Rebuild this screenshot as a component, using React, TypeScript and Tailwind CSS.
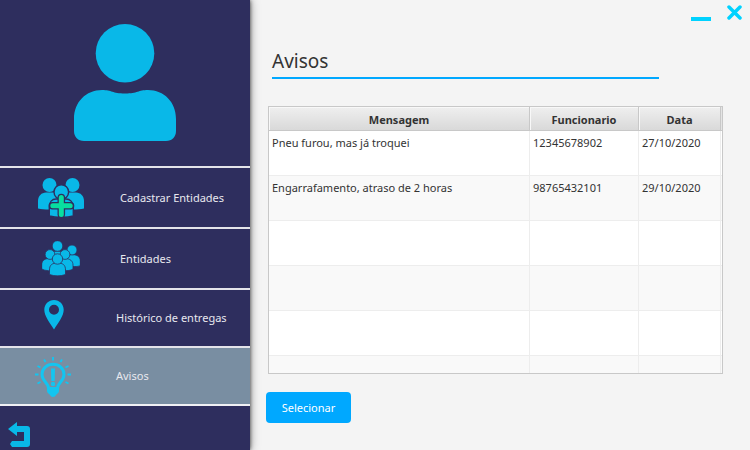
import type { ReactNode } from "react";

function UserIcon() {
  return (
    <svg width="102" height="118" viewBox="0 0 102 118" fill="#09b8e8" aria-hidden="true">
      <circle cx="51" cy="29.3" r="29.3" />
      <path d="M0 95C0 78 12 66 28 66C38 66 38 69.500 51 69.500C64 69.500 64 66 74 66C90 66 102 78 102 95V107C102 113 98 117 92 117H10C4 117 0 113 0 107Z" />
    </svg>
  );
}

function AddPeopleIcon() {
  return (
    <svg width="48" height="40" viewBox="0 0 48 40" aria-hidden="true">
      <g fill="#09b8e8">
        <circle cx="12.500" cy="7" r="7" />
        <circle cx="35.500" cy="7" r="7" />
        <path d="M1 30.500V23C1 18 4.500 14.500 9 14.500H20V31C13 32 6 31.500 1 30.500Z" />
        <path d="M47 30.500V23C47 18 43.500 14.500 39 14.500H28V31C35 32 42 31.500 47 30.500Z" />
      </g>
      <g fill="#09b8e8" stroke="#2e2e5e" strokeWidth="1.400">
        <path d="M12.300 38V29C12.300 24 15 21 19 21H29C33 21 36.300 24 36.300 29V38C30 40 19 40 12.300 38Z" />
        <circle cx="24.300" cy="14" r="7.300" />
      </g>
      <path d="M24.300 19.500V36.500M15.500 27.800H33.500" stroke="#2e2e5e" strokeWidth="7.600" strokeLinecap="round" />
      <path d="M24.300 19.500V36.500M15.800 27.800H33.200" stroke="#08dfa0" strokeWidth="5" strokeLinecap="round" />
    </svg>
  );
}

function PeopleIcon() {
  return (
    <svg width="38" height="35" viewBox="0 0 38 35" fill="#09b8e8" stroke="#2e2e5e" strokeWidth="0.800" aria-hidden="true">
      <path d="M9 23V17C9 12 11 10 15.500 10S22 12 22 17V23Z" />
      <circle cx="15.500" cy="5" r="5.300" />
      <path d="M22 24V20C22 15 25 13.500 29.500 13.500S38.300 15 38.300 20V24.500C36 26 30 26 22 24Z" />
      <circle cx="30" cy="9" r="5" />
      <path d="M-.3 28V24C-.3 19 3 17.500 8 17.500S15 20 15 24V29.500C9 30 3 30 -.3 28Z" />
      <circle cx="8" cy="13.500" r="4.900" />
      <path d="M16 29V24C16 19 18 17.500 23 17.500S31 20 31 24V28C28 30 23 30 16 29Z" />
      <circle cx="23" cy="13.500" r="4.900" />
      <path d="M7.500 33.500V29C7.500 24 10 22 15.500 22S23.500 24 23.500 29V33.500C19 35.300 12 35.300 7.500 33.500Z" />
      <circle cx="15.500" cy="18" r="5.200" />
    </svg>
  );
}

function PinIcon() {
  return (
    <svg width="20" height="36" viewBox="0 0 20 36" aria-hidden="true">
      <path
        fill="#09b8e8"
        fillRule="evenodd"
        d="M10 0C4.500 0 .3 4.300 .3 9.700C.3 16 5.500 22 10 29.500C14.500 22 19.700 16 19.700 9.700C19.700 4.300 15.500 0 10 0ZM10 4.700A5 5 0 1 1 10 14.700A5 5 0 0 1 10 4.700Z"
      />
    </svg>
  );
}

function BulbIcon() {
  return (
    <svg width="36" height="42" viewBox="0 0 36 42" fill="none" stroke="#13c5f0" aria-hidden="true">
      <g transform="translate(0 2)">
        <path
          d="M13.500 31C13.500 26 7 24 7 17.500C7 11.500 12 7.300 18 7.300S29 11.500 29 17.500C29 24 22.500 26 22.500 31"
          strokeWidth="3"
        />
        <path d="M12 30H24V34C24 36 22 36.500 21 38C20 40.500 16 40.500 15 38C14 36.500 12 36 12 34Z" fill="#13c5f0" stroke="none" />
        <path d="M16 11.500H20L19.700 24H16.300Z" fill="#13c5f0" stroke="none" />
        <circle cx="18" cy="27" r="2.200" fill="#13c5f0" stroke="none" />
        <path
          d="M18 0V3.500M9 2.500L10.500 5M27 2.500L25.500 5M2.500 9L5.500 10.500M33.500 9L30.500 10.500M0 17.500H3.500M32.500 17.500H36M2.500 26.500L5.500 25M33.500 26.500L30.500 25"
          strokeWidth="1.900"
        />
      </g>
    </svg>
  );
}

function BackIcon() {
  return (
    <svg width="22" height="25" viewBox="0 0 22 25" fill="#09b8e8" aria-hidden="true">
      <path d="M0 7L9 0V4H19C21 4 22 5 22 7V22C22 24 21 25 19 25H4L2 22L4 19H16V10H9V14Z" />
    </svg>
  );
}

type MenuItem = { label: string; icon: ReactNode; row: string; slot: string };

const menu: MenuItem[] = [
  { label: "Cadastrar Entidades", icon: <AddPeopleIcon />, row: "h-[61px]", slot: "w-[120px] pl-0.5" },
  { label: "Entidades", icon: <PeopleIcon />, row: "h-[61px]", slot: "w-[120px] pl-0.5" },
  { label: "Histórico de entregas", icon: <PinIcon />, row: "h-[58px]", slot: "w-[116px] pr-2" },
  { label: "Avisos", icon: <BulbIcon />, row: "h-[58px] bg-[#798ea2]", slot: "w-[116px] pr-2.5" },
];

const notices = [
  { message: "Pneu furou, mas já troquei", employee: "12345678902", date: "27/10/2020" },
  { message: "Engarrafamento, atraso de 2 horas", employee: "98765432101", date: "29/10/2020" },
  { message: "", employee: "", date: "" },
  { message: "", employee: "", date: "" },
  { message: "", employee: "", date: "" },
  { message: "", employee: "", date: "" },
];

const headCell =
  "border-r border-b border-[#c8c8c8] bg-linear-to-b from-[#efefef] to-[#d9d9d9] px-0 pt-0.5 pb-0 text-center font-bold shadow-[inset_1px_1px_0_#f8f8f8]";
const bodyCell = "border-r border-b border-[#ededed] px-[3px] pt-1 pb-0 align-top";

export default function App() {
  return (
    <div className="flex h-screen overflow-hidden bg-[#f4f4f4] font-['Noto_Sans','Open_Sans',sans-serif] text-[11px] leading-4 text-[#333333]">
      <aside className="z-10 flex w-[250px] shrink-0 flex-col bg-[#2e2e5e] shadow-[0_0_4px_#000000b0,0_0_10px_#00000060]">
        <div className="flex h-[166px] shrink-0 items-center justify-center">
          <UserIcon />
        </div>
        <nav className="flex flex-col">
          {menu.map((item) => (
            <button
              key={item.label}
              type="button"
              className={`flex items-center border-t-2 border-[#e4e4ea] text-left text-[#e8e8ee] ${item.row}`}
            >
              <span className={`flex shrink-0 justify-center ${item.slot}`}>{item.icon}</span>
              {item.label}
            </button>
          ))}
        </nav>
        <div className="flex flex-1 items-end border-t-2 border-[#f0f0f4] px-2 pb-[3px]">
          <button type="button" aria-label="Voltar">
            <BackIcon />
          </button>
        </div>
      </aside>

      <main className="flex min-w-0 flex-1 flex-col pb-[27px]">
        <div className="flex h-12 shrink-0 items-start justify-end gap-4 pt-[5px] pr-2">
          <button type="button" aria-label="Minimizar" className="pt-3">
            <span className="block h-1 w-5 bg-[#00d2ff]" />
          </button>
          <button type="button" aria-label="Fechar">
            <svg width="15" height="15" viewBox="0 0 15 15" stroke="#00d2ff" strokeWidth="3.500" strokeLinecap="round">
              <path d="M2 2L13 13M13 2L2 13" />
            </svg>
          </button>
        </div>
        <h1 className="mr-[91px] ml-[22px] border-b-2 border-[#00a8ff] pb-0.5 text-[19px] leading-[27px]">Avisos</h1>
        <div className="mt-[27px] mr-[27px] ml-[18px] min-h-0 flex-1 overflow-hidden border border-[#c8c8c8] bg-white">
          <table className="w-full table-fixed border-separate border-spacing-0">
            <colgroup>
              <col />
              <col className="w-[109px]" />
              <col className="w-[82px]" />
              <col className="w-px" />
            </colgroup>
            <thead>
              <tr className="h-6">
                <th className={headCell}>Mensagem</th>
                <th className={headCell}>Funcionario</th>
                <th className={headCell}>Data</th>
                <td className="border-b border-[#c8c8c8] bg-[#e4e4e4] p-0" />
              </tr>
            </thead>
            <tbody>
              {notices.map((notice, index) => (
                <tr key={index} className="h-[45px] even:bg-[#f9f9f9]">
                  <td className={bodyCell}>{notice.message}</td>
                  <td className={bodyCell}>{notice.employee}</td>
                  <td className={bodyCell}>{notice.date}</td>
                  <td className="border-b border-[#ededed] p-0" />
                </tr>
              ))}
            </tbody>
          </table>
        </div>
        <button
          type="button"
          className="mt-[18px] ml-4 h-[31px] w-[85px] shrink-0 rounded-sm bg-[#00a8ff] text-white"
        >
          Selecionar
        </button>
      </main>
    </div>
  );
}
